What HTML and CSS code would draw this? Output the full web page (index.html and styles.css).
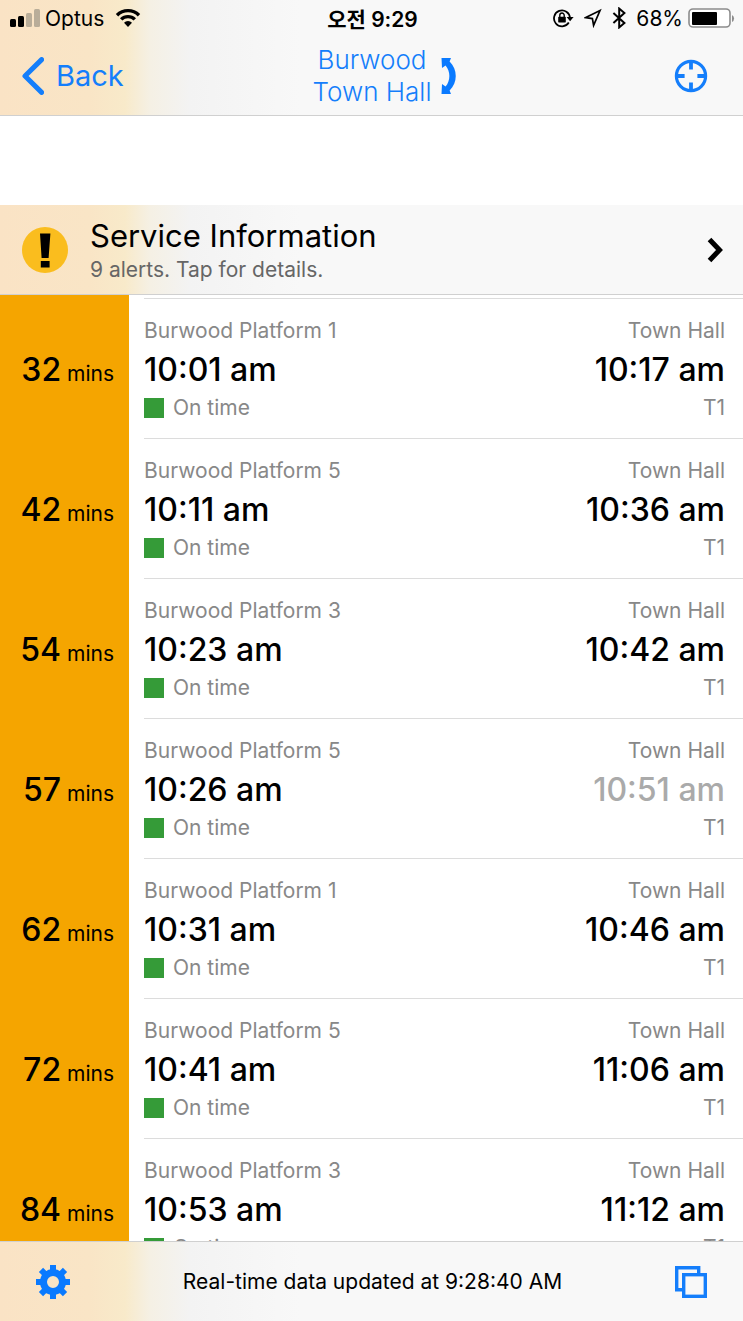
FILE: index.html
```html
<!DOCTYPE html>
<html lang="en">
<head>
    <meta charset="UTF-8">
    <meta name="viewport" content="width=device-width, initial-scale=1.0">
    <title>Burwood to Town Hall</title>
    <link rel="stylesheet" href="styles.css">
</head>
<body>

    <header class="top-bar frosted">
        <div class="status-bar">
            <div class="status-left">
                <svg class="signal" width="30" height="20" viewBox="0 0 30 20">
                    <rect x="0" y="11" width="6" height="8" rx="1.5"/>
                    <rect x="8" y="8" width="6" height="11" rx="1.5"/>
                    <rect class="dim" x="16" y="5" width="6" height="14" rx="1.5"/>
                    <rect class="dim" x="24" y="1" width="6" height="18" rx="1.5"/>
                </svg>
                <span>Optus</span>
                <svg class="wifi" width="26" height="20" viewBox="0 0 26 20">
                    <path d="M2 7.2a15.6 15.6 0 0 1 22 0M6.2 11.4a9.6 9.6 0 0 1 13.6 0" fill="none" stroke="#000" stroke-width="3.4"/>
                    <path d="M13 19l-4-4.2a5.6 5.6 0 0 1 8 0z"/>
                </svg>
            </div>
            <div class="status-time">오전 9:29</div>
            <div class="status-right">
                <svg width="21" height="20" viewBox="0 0 21 20">
                    <path d="M15.8 14.6A8 8 0 1 1 17 10" fill="none" stroke="#000" stroke-width="1.8"/>
                    <path d="M13.6 9h7l-3.5 4.2z"/>
                    <rect x="5.2" y="8.8" width="7.6" height="5.6" rx="0.6"/>
                    <path d="M6.8 9V7.2a2.2 2.2 0 0 1 4.4 0V9" fill="none" stroke="#000" stroke-width="1.4"/>
                </svg>
                <svg width="18" height="20" viewBox="0 0 18 20">
                    <path d="M1.8 9.6L16 2.6 9.6 17.4 8.4 10.6z" fill="none" stroke="#000" stroke-width="1.7"/>
                </svg>
                <svg width="14" height="22" viewBox="0 0 14 22">
                    <path d="M1.4 6l11 10L7.2 20.4V1.6L12.4 6l-11 10" fill="none" stroke="#000" stroke-width="2"/>
                </svg>
                <span class="battery-text">68%</span>
                <svg width="47" height="20" viewBox="0 0 47 20">
                    <rect x="1" y="1" width="41" height="18" rx="4" fill="#fff" stroke="#8c8c8c" stroke-width="1.6"/>
                    <rect x="4" y="4" width="25" height="13" rx="1"/>
                    <path d="M44 7a4 4 0 0 1 0 7z" fill="#8c8c8c"/>
                </svg>
            </div>
        </div>
        <nav class="nav-bar">
            <button class="back-btn">
                <svg width="22" height="38" viewBox="0 0 22 38">
                    <path d="M19.6 2.6L3 19l16.6 16.4" fill="none" stroke="#147efb" stroke-width="5" stroke-linecap="round" stroke-linejoin="round"/>
                </svg>
                Back
            </button>
            <button class="route-btn">
                <span>Burwood<br>Town Hall</span>
                <svg width="16" height="38" viewBox="0 0 16 38">
                    <path d="M0.5 1H10L8.6 4.6C16.8 12.6 16.8 25.4 8.6 33.4L10 37H0.5L1 27l3.6 2.6C9.6 23.6 9.6 14.4 4.6 8.4L1 11z" fill="#0a7aff"/>
                </svg>
            </button>
            <button class="locate-btn" aria-label="Locate">
                <svg width="34" height="34" viewBox="0 0 34 34">
                    <circle cx="17" cy="17" r="14.6" fill="none" stroke="#147efb" stroke-width="3.2"/>
                    <path d="M17 2v8.6M17 23.4V32M2 17h8.6M23.4 17H32" stroke="#147efb" stroke-width="3.8"/>
                </svg>
            </button>
        </nav>
    </header>

    <main class="content">
        <button class="service-info frosted">
            <svg class="alert-icon" width="46" height="46" viewBox="0 0 46 46">
                <circle cx="23" cy="23" r="23" fill="#fabd1e"/>
                <path d="M18 6.5h10.4L26.6 31h-7zM18.8 34h8.8v6.6h-8.8z"/>
            </svg>
            <span class="service-text">
                <span class="service-title">Service Information</span>
                <span class="service-detail">9 alerts. Tap for details.</span>
            </span>
            <svg width="16" height="26" viewBox="0 0 16 26">
                <path d="M2.5 2.5L12.5 13 2.5 23.5" fill="none" stroke="#000" stroke-width="5"/>
            </svg>
        </button>

        <ul class="trip-list" id="trip-list">
            <!-- Trips are added by the script below -->
        </ul>
    </main>

    <footer class="bottom-bar frosted">
        <button aria-label="Settings">
            <svg width="36" height="36" viewBox="-18 -18 36 36" fill="#0a7aff">
                <path fill-rule="evenodd" d="M0-13a13 13 0 1 0 0 26a13 13 0 1 0 0-26zM0-6a6 6 0 1 1 0 12a6 6 0 1 1 0-12z"/>
                <g id="tooth-pair">
                    <path d="M-3-17h6v6h-6zM-3 11h6v6h-6z"/>
                </g>
                <use href="#tooth-pair" transform="rotate(45)"/>
                <use href="#tooth-pair" transform="rotate(90)"/>
                <use href="#tooth-pair" transform="rotate(135)"/>
            </svg>
        </button>
        <span>Real-time data updated at 9:28:40 AM</span>
        <button aria-label="Windows">
            <svg width="34" height="34" viewBox="0 0 34 34" fill="none" stroke="#147efb" stroke-width="3.4">
                <path d="M9 24.8H2.7V2.7h22V9"/>
                <rect x="9.7" y="9.7" width="21.6" height="21.6"/>
            </svg>
        </button>
    </footer>

    <script>
        const trips = [
            { mins: 32, platform: 1, departs: '10:01 am', arrives: '10:17 am' },
            { mins: 42, platform: 5, departs: '10:11 am', arrives: '10:36 am' },
            { mins: 54, platform: 3, departs: '10:23 am', arrives: '10:42 am' },
            { mins: 57, platform: 5, departs: '10:26 am', arrives: '10:51 am', slower: true },
            { mins: 62, platform: 1, departs: '10:31 am', arrives: '10:46 am' },
            { mins: 72, platform: 5, departs: '10:41 am', arrives: '11:06 am' },
            { mins: 84, platform: 3, departs: '10:53 am', arrives: '11:12 am' }
        ];

        const tripList = document.getElementById('trip-list');

        trips.forEach(trip => {
            const item = document.createElement('li');
            item.className = 'trip';
            item.innerHTML = `
                <div class="countdown"><span class="minutes">${trip.mins}</span> mins</div>
                <div class="trip-details">
                    <div class="departure">
                        <div>Burwood Platform ${trip.platform}</div>
                        <div class="time">${trip.departs}</div>
                        <div class="on-time">On time</div>
                    </div>
                    <div class="arrival">
                        <div>Town Hall</div>
                        <div class="time ${trip.slower ? 'slower' : ''}">${trip.arrives}</div>
                        <div>T1</div>
                    </div>
                </div>
            `;
            tripList.appendChild(item);
        });
    </script>

</body>
</html>
```
FILE: styles.css
```css
* {
    box-sizing: border-box;
}

body {
    font-family: Inter, 'Noto Sans CJK KR', sans-serif;
    font-size: 21px;
    margin: 0;
    height: 100vh;
    display: flex;
    flex-direction: column;
    background-color: #fff;
    color: #000;
}

button {
    font: inherit;
    color: #147efb;
    background: none;
    border: none;
    padding: 0;
    cursor: pointer;
}

svg {
    display: block;
    flex-shrink: 0;
}

.frosted {
    background: linear-gradient(to right, #fae3c5 0, #f9e5c6 90px, #f8eaca 125px, #f5f0e4 150px, #f3f3f3 190px, #f8f8f8 300px);
}

.top-bar {
    height: 116px;
    flex-shrink: 0;
    border-bottom: 1px solid #d0d0d0;
}

.status-bar {
    display: grid;
    grid-template-columns: 1fr auto 1fr;
    align-items: center;
    height: 36px;
    padding: 0 8px 0 10px;
}

.status-left, .status-right {
    display: flex;
    align-items: center;
    gap: 10px;
}

.status-left {
    gap: 5px;
}

.wifi {
    margin-left: 6px;
}

.status-right {
    justify-content: flex-end;
}

.dim {
    fill: #b9ad99;
}

.status-time {
    font-weight: 600;
}

.battery-text {
    margin-right: -5px;
}

.nav-bar {
    display: grid;
    grid-template-columns: 1fr auto 1fr;
    align-items: center;
    height: 79px;
    padding: 0 35px 0 22px;
}

.back-btn {
    display: flex;
    align-items: center;
    gap: 12px;
    font-size: 29px;
    justify-self: start;
}

/* Left padding balances the swap icon so the names stay centred */
.route-btn {
    display: flex;
    align-items: center;
    gap: 10px;
    padding-left: 40px;
    font-size: 26px;
    font-weight: 300;
    line-height: 32px;
}

.locate-btn {
    justify-self: end;
}

.content {
    flex: 1;
    min-height: 0;
    display: flex;
    flex-direction: column;
    padding-top: 89px;
}

.service-info {
    display: flex;
    align-items: center;
    gap: 22px;
    height: 90px;
    flex-shrink: 0;
    padding: 0 20px 0 22px;
    border-bottom: 1px solid #d0d0d0;
    color: #000;
    text-align: left;
}

.service-text {
    flex: 1;
    padding-top: 2px;
}

.service-title, .service-detail {
    display: block;
}

.service-title {
    font-size: 31px;
    line-height: 38px;
}

.service-detail {
    color: #666;
    line-height: 30px;
}

.trip-list {
    list-style: none;
    flex: 1;
    min-height: 0;
    overflow: hidden;
    margin: 0;
    padding: 3px 0 0;
    background: linear-gradient(to right, #f5a500 129px, #fff 129px);
}

.trip {
    display: grid;
    grid-template-columns: 129px 1fr;
    height: 140px;
}

.countdown {
    padding: 0 15px 0 0;
    text-align: right;
    line-height: 143px;
}

.minutes {
    font-size: 32px;
    font-weight: 500;
}

.trip-details {
    display: flex;
    justify-content: space-between;
    margin-left: 15px;
    padding: 17px 18px 0 0;
    border-top: 1px solid #dcdcdc;
    color: #888;
    line-height: 30px;
}

.time {
    font-size: 32px;
    font-weight: 500;
    line-height: 47px;
    color: #000;
}

.slower {
    color: #aaa;
}

.arrival {
    text-align: right;
}

.on-time {
    display: flex;
    align-items: center;
    gap: 9px;
}

.on-time::before {
    content: '';
    width: 20px;
    height: 20px;
    background-color: #359b38;
}

.bottom-bar {
    display: flex;
    justify-content: space-between;
    align-items: center;
    height: 80px;
    flex-shrink: 0;
    padding: 0 35px;
    border-top: 1px solid #d0d0d0;
}
```
